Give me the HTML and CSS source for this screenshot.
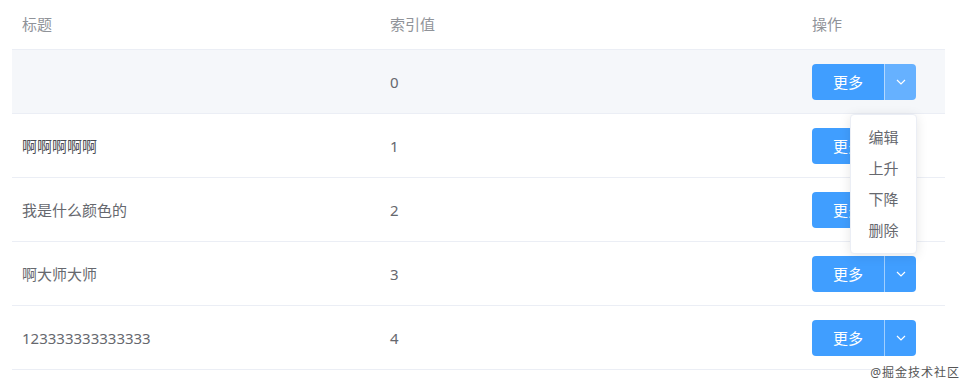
FILE: index.html
```html
<!DOCTYPE html>
<html lang="zh-CN">
    <head>
        <meta charset="utf-8">
        <title>表格操作</title>
        <link rel="stylesheet" href="styles.css">
    </head>
    <body>
        <div class="wrapper">
            <table class="table">
                <colgroup>
                    <col class="col-title">
                    <col class="col-index">
                    <col class="col-action">
                </colgroup>
                <thead>
                    <tr>
                        <th>标题</th>
                        <th>索引值</th>
                        <th>操作</th>
                    </tr>
                </thead>
                <tbody>
                    <tr class="hover">
                        <td></td>
                        <td>0</td>
                        <td>
                            <div class="split-btn">
                                <span class="btn-main">更多</span>
                                <span class="btn-caret active">
                                    <svg width="10" height="6" viewBox="0 0 10 6"><polyline points="1,1 5,5 9,1" fill="none" stroke="#fff" stroke-width="1.2"/></svg>
                                </span>
                            </div>
                        </td>
                    </tr>
                    <tr>
                        <td class="dark">啊啊啊啊啊</td>
                        <td>1</td>
                        <td>
                            <div class="split-btn">
                                <span class="btn-main">更多</span>
                                <span class="btn-caret">
                                    <svg width="10" height="6" viewBox="0 0 10 6"><polyline points="1,1 5,5 9,1" fill="none" stroke="#fff" stroke-width="1.2"/></svg>
                                </span>
                            </div>
                        </td>
                    </tr>
                    <tr>
                        <td>我是什么颜色的</td>
                        <td>2</td>
                        <td>
                            <div class="split-btn">
                                <span class="btn-main">更多</span>
                                <span class="btn-caret">
                                    <svg width="10" height="6" viewBox="0 0 10 6"><polyline points="1,1 5,5 9,1" fill="none" stroke="#fff" stroke-width="1.2"/></svg>
                                </span>
                            </div>
                        </td>
                    </tr>
                    <tr>
                        <td>啊大师大师</td>
                        <td>3</td>
                        <td>
                            <div class="split-btn">
                                <span class="btn-main">更多</span>
                                <span class="btn-caret">
                                    <svg width="10" height="6" viewBox="0 0 10 6"><polyline points="1,1 5,5 9,1" fill="none" stroke="#fff" stroke-width="1.2"/></svg>
                                </span>
                            </div>
                        </td>
                    </tr>
                    <tr>
                        <td>123333333333333</td>
                        <td>4</td>
                        <td>
                            <div class="split-btn">
                                <span class="btn-main">更多</span>
                                <span class="btn-caret">
                                    <svg width="10" height="6" viewBox="0 0 10 6"><polyline points="1,1 5,5 9,1" fill="none" stroke="#fff" stroke-width="1.2"/></svg>
                                </span>
                            </div>
                        </td>
                    </tr>
                </tbody>
            </table>

            <!-- dropdown opened from the first row -->
            <ul class="menu">
                <li>编辑</li>
                <li>上升</li>
                <li>下降</li>
                <li>删除</li>
            </ul>

            <div class="watermark">@掘金技术社区</div>
        </div>
    </body>
</html>
```

FILE: styles.css
```css
html, body {
    margin: 0;
    padding: 0;
    background: #fff;
    font-family: "Noto Sans", "Noto Sans CJK SC", sans-serif;
    font-size: 15px;
    color: #66686e;
}
.wrapper {
    position: relative;
    padding: 2px 25px 0 12px;
    height: 384px;
}
.table {
    width: 933px;
    border-collapse: collapse;
    table-layout: fixed;
}
.col-title {
    width: 368px;
}
.col-index {
    width: 422px;
}
.col-action {
    width: 143px;
}
.table th {
    height: 44px;
    padding: 0 10px 3px;
    text-align: left;
    font-weight: normal;
    color: #909399;
    border-bottom: 1px solid #ebeef5;
    vertical-align: middle;
    line-height: 20px;
}
.table td {
    height: 63px;
    padding: 0 10px;
    border-bottom: 1px solid #ebeef5;
    vertical-align: middle;
    line-height: 20px;
}
.table tr.hover td {
    background: #f5f7fa;
}
.table td.dark {
    color: #4a4c52;
}
.split-btn {
    display: inline-flex;
    height: 36px;
    border-radius: 4px;
    overflow: hidden;
    color: #fff;
    vertical-align: middle;
}
.btn-main {
    width: 72px;
    display: flex;
    align-items: center;
    justify-content: center;
    background: #409eff;
}
.btn-caret {
    width: 31px;
    display: flex;
    align-items: center;
    justify-content: center;
    background: #409eff;
    border-left: 1px solid rgba(255, 255, 255, 0.5);
}
.btn-caret.active {
    background: #66b1ff;
}
.menu {
    position: absolute;
    left: 850px;
    top: 114px;
    width: 67px;
    margin: 0;
    padding: 7px 0;
    list-style: none;
    background: #fff;
    border: 1px solid #ebeef5;
    border-radius: 4px;
    box-shadow: 0 2px 12px rgba(0, 0, 0, 0.1);
    box-sizing: border-box;
}
.menu li {
    height: 31px;
    line-height: 31px;
    text-align: center;
    color: #66686e;
}
.watermark {
    position: absolute;
    right: 10px;
    bottom: 5px;
    font-size: 12px;
    letter-spacing: 1px;
    color: #555;
    text-shadow: 0 0 2px #fff;
}
```
